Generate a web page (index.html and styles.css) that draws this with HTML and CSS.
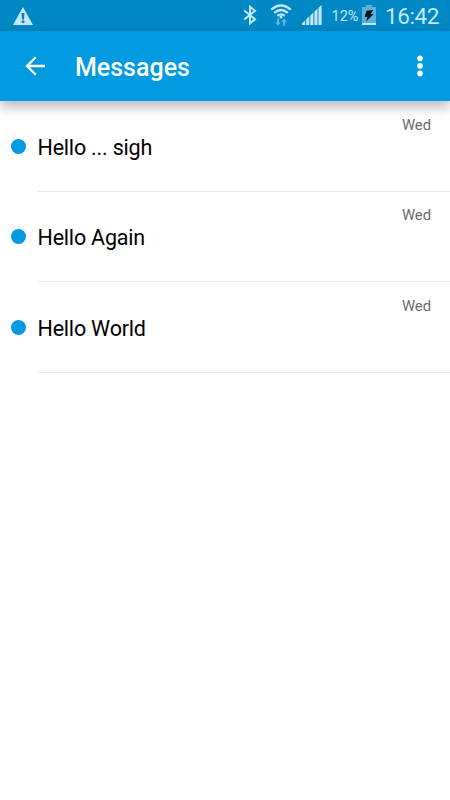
FILE: index.html
```html
<!DOCTYPE html>
<html lang="en">
<head>
<meta charset="utf-8">
<title>Messages</title>
<link rel="stylesheet" href="styles.css">
</head>
<body>
<div class="status">
  <svg class="warning" width="20" height="18" viewBox="0 0 20 18"><path fill="#c4e7f7" d="M10 0 20 18H0z"/><path fill="#0088c4" d="M8.5 6h3l-.5 6.5H9zM8.7 13.5h2.7V16H8.7z"/></svg>
  <svg class="bluetooth" width="14" height="20" viewBox="0 0 14 20"><path fill="none" stroke="#c4e7f7" stroke-width="2" d="M1.2 5.5 12 14.3 7 18.3V1.7l5 4L1.2 14.5"/></svg>
  <svg class="wifi" width="22" height="22" viewBox="0 0 22 22"><g fill="none" stroke="#c4e7f7" stroke-width="2.2"><path d="M1.2 5.6Q11-2.6 20.8 5.6M4.2 8.8Q11 3.2 17.8 8.8M7.3 11.8Q11 9 14.7 11.8"/></g><circle cx="11" cy="13" r="1.5" fill="#c4e7f7"/><path fill="#65b7dc" d="M7.1 14.5h2v4h1.8l-2.8 3.3-2.8-3.3h1.8zM13.1 21.8v-4h-1.8l2.8-3.3 2.8 3.3h-1.8v4z"/></svg>
  <svg class="signal" width="20" height="20" viewBox="0 0 20 20"><path fill="#c4e7f7" d="M0 18.2 3.2 15.2V20H0zM4.2 14.3 7.3 11.2V20H4.2zM8.3 10.5 11.4 7.4V20H8.3zM12.4 6.7 15.5 3.6V20h-3.1zM16.5 2.8 19.6 0V20h-3.1z"/></svg>
  <span class="percent">12%</span>
  <svg class="battery" width="14" height="20" viewBox="0 0 14 20"><path fill="#5ab2da" d="M4 0h6v2h4v16.5H0V2h4z"/><path fill="#c4e7f7" d="M0 18h14v2H0z"/><path fill="#07171f" d="M4.5 5.8 11.2 5 8.5 9.2 11.8 8.9 4 16.5 5.6 11.8 2.6 12z"/></svg>
  <span class="clock">16:42</span>
</div>
<header class="appbar">
  <svg class="back" width="20" height="20" viewBox="0 0 20 20"><path fill="none" stroke="#fff" stroke-width="2.3" d="M20 10H2M10.8 1.2 2 10l8.8 8.8"/></svg>
  <h1 class="title">Messages</h1>
  <svg class="more" width="6" height="22" viewBox="0 0 6 22"><g fill="#fff"><circle cx="3" cy="3.4" r="2.8"/><circle cx="3" cy="10.9" r="2.8"/><circle cx="3" cy="18.4" r="2.8"/></g></svg>
</header>
<main class="list">
  <div class="row"><i class="dot"></i><div class="content"><span class="subject">Hello ... sigh</span><time class="day">Wed</time></div></div>
  <div class="row"><i class="dot"></i><div class="content"><span class="subject">Hello Again</span><time class="day">Wed</time></div></div>
  <div class="row last"><i class="dot"></i><div class="content"><span class="subject">Hello World</span><time class="day">Wed</time></div></div>
</main>
</body>
</html>
```
FILE: styles.css
```css
* { box-sizing: border-box; }
body {
  margin: 0;
  width: 450px;
  height: 800px;
  overflow: hidden;
  background: #fff;
  font-family: Roboto, sans-serif;
}
svg { display: block; flex: none; }
.status {
  display: flex;
  align-items: flex-start;
  height: 31px;
  padding: 5px 0 0 13px;
  background: #0088c4;
  color: #c4e7f7;
}
.warning { margin-top: 2px; }
.bluetooth { margin-left: 210px; }
.wifi { margin-left: 13px; margin-top: -1px; }
.signal { margin-left: 10px; }
.percent {
  width: 30.5px;
  margin: 3px 0 0 9.5px;
  font-size: 14.5px;
  line-height: 18px;
}
.clock {
  margin: -1px 0 0 9px;
  font-size: 22.5px;
  letter-spacing: -.4px;
  line-height: 24px;
  white-space: nowrap;
}
.appbar {
  position: relative;
  display: flex;
  align-items: center;
  height: 70px;
  padding: 0 27px 0 25px;
  background: #009ae0;
  color: #fff;
  box-shadow: 0 6px 12px rgba(0, 0, 0, .28);
}
.title {
  flex: 1;
  margin: 3px 0 0 30px;
  font-size: 25px;
  font-weight: 500;
  line-height: 30px;
}
.list { padding-top: 1px; }
.row {
  display: flex;
  height: 90px;
  padding-left: 11px;
}
.dot {
  flex: none;
  width: 15px;
  height: 15px;
  margin: 37px 12px 0 0;
  border-radius: 50%;
  background: #009ae0;
}
.content {
  display: flex;
  flex: 1;
  justify-content: space-between;
  padding-right: 19px;
  border-bottom: 1px solid #e7e7e7;
}
.subject {
  margin: 33px 0 0 -.5px;
  color: #000;
  font-size: 21.5px;
  letter-spacing: -.2px;
  line-height: 26px;
}
.day {
  margin-top: 14px;
  color: #6b6b6b;
  font-size: 14.8px;
  line-height: 18px;
}
.row.last { height: 91px; }
.last .dot { margin-top: 38px; }
.last .subject { margin-top: 34px; }
.last .day { margin-top: 15px; }
```
